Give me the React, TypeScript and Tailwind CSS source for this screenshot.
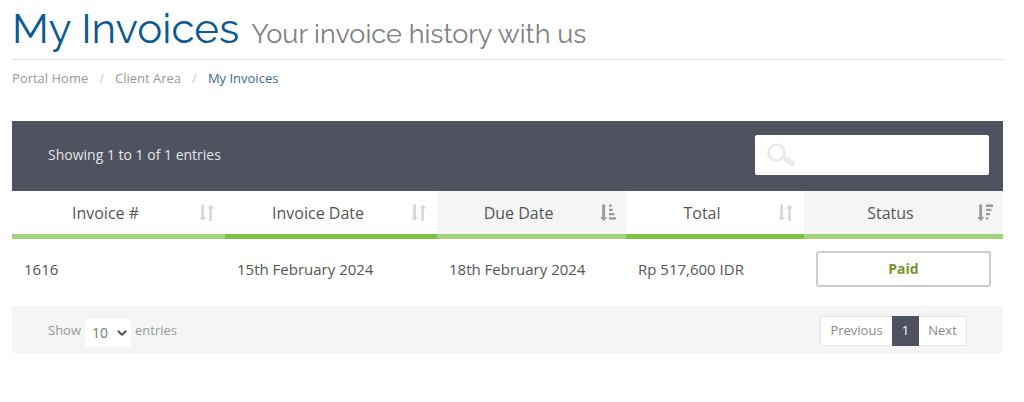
import React from "react";

type SortState = "none" | "asc" | "desc";

const columns: { label: string; sort: SortState; width: string; line: string }[] = [
  { label: "Invoice #", sort: "none", width: "w-[213px]", line: "border-[#a3d47c]" },
  { label: "Invoice Date", sort: "none", width: "w-[212px]", line: "border-[#7cc246]" },
  { label: "Due Date", sort: "asc", width: "w-[189px]", line: "border-[#a3d47c]" },
  { label: "Total", sort: "none", width: "w-[178px]", line: "border-[#7cc246]" },
  { label: "Status", sort: "desc", width: "w-[199px]", line: "border-[#a3d47c]" },
];

const invoices = [
  {
    id: "1616",
    date: "15th February 2024",
    due: "18th February 2024",
    total: "Rp 517,600 IDR",
    status: "Paid",
  },
];

function SortIcon({ sort }: { sort: SortState }) {
  return (
    <svg
      viewBox="0 0 16 18"
      className={`w-4 h-[18px] shrink-0 ${sort === "none" ? "text-[#d9d9d9]" : "text-[#9a9a9a]"}`}
      fill="currentColor"
      aria-hidden="true"
    >
      <path d="M2.2 .6h2.9v12.6h2.4L3.7 17 0 13.2h2.2z" />
      {sort === "none" && <path d="M10.2 17h2.7V4.4h2.6L11.6.6 7.9 4.4h2.3z" />}
      {sort === "asc" && (
        <path d="M9 .6h2.6v2.2H9zM9 4.7h3.6V7H9zM9 8.9h5.2v2.3H9zM9 13.2h7v2.4H9z" />
      )}
      {sort === "desc" && (
        <path d="M9 .6h7V3H9zM9 4.8h5.4v2.3H9zM9 9h4v2.3H9zM9 13.2h2.4v2.3H9z" />
      )}
    </svg>
  );
}

export default function App() {
  return (
    <main className="w-full bg-white pl-3 pr-[21px] pt-1 pb-12 font-['Open_Sans',sans-serif] text-[#555]">
      {/* Page heading */}
      <header className="border-b border-[#ddd] h-14 flex items-baseline gap-3 font-['Raleway','Lato',sans-serif]">
        <h1 className="text-[42px] leading-[50px] font-normal text-[#0b5a92]">My Invoices</h1>
        <p className="text-[27px] leading-[50px] font-normal text-[#808080]">Your invoice history with us</p>
      </header>

      <nav aria-label="Breadcrumb" className="pt-2">
        <ol className="flex text-[13px] leading-5 text-[#999]">
          <li><a href="#home">Portal Home</a></li>
          <li className="px-[11px] text-[#ccc]" aria-hidden="true">/</li>
          <li><a href="#client">Client Area</a></li>
          <li className="px-[11px] text-[#ccc]" aria-hidden="true">/</li>
          <li className="text-[#406a8c]" aria-current="page">My Invoices</li>
        </ol>
      </nav>

      {/* Invoice list */}
      <section className="mt-[33px]">
        <div className="flex items-center justify-between bg-[#4f5360] pl-9 pr-[14px] pb-[2px] h-[70px]">
          <p className="text-sm leading-5 text-[#e4e4e6]">Showing 1 to 1 of 1 entries</p>
          <label className="flex items-center w-[234px] h-10 rounded-xs bg-white pl-3">
            <svg viewBox="0 0 30 26" className="w-[30px] h-[26px] shrink-0" fill="none" aria-hidden="true">
              <circle cx="9.5" cy="10.5" r="8" stroke="#e6eaea" strokeWidth="2.6" />
              <path d="M15.5 14.5l3 2.2" stroke="#e6eaea" strokeWidth="2.5" />
              <path d="M18 16.2l8.8 6.6" stroke="#e6eaea" strokeWidth="5" />
            </svg>
            <input type="search" aria-label="Search invoices" className="w-full min-w-0 px-2 text-sm outline-none" />
          </label>
        </div>

        <table className="w-full table-fixed border-separate border-spacing-0">
          <thead>
            <tr>
              {columns.map((c) => (
                <th
                  key={c.label}
                  className={`${c.width} ${c.line} ${c.sort === "none" ? "bg-white" : "bg-[#f5f5f5]"} border-b-5 p-0 font-normal`}
                >
                  <button type="button" className="w-full h-[43px] px-[10px] flex items-center gap-[10px] text-base">
                    <span className="flex-1 text-center">{c.label}</span>
                    <SortIcon sort={c.sort} />
                  </button>
                </th>
              ))}
            </tr>
          </thead>
          <tbody>
            {invoices.map((inv) => (
              <tr key={inv.id} className="text-[15px] leading-5">
                <td className="px-3 pt-3 pb-[19px]">{inv.id}</td>
                <td className="px-3 pt-3 pb-[19px]">{inv.date}</td>
                <td className="px-3 pt-3 pb-[19px]">{inv.due}</td>
                <td className="px-3 pt-3 pb-[19px]">{inv.total}</td>
                <td className="px-3 pt-3 pb-[19px]">
                  <span className="flex items-center justify-center h-9 rounded-[3px] border-2 border-[#ccc] text-sm leading-5 font-bold text-[#779530]">
                    {inv.status}
                  </span>
                </td>
              </tr>
            ))}
          </tbody>
        </table>

        {/* Page size and pager */}
        <div className="flex items-center justify-between h-[47px] bg-[#f5f5f5] px-9 pt-[2px] text-[13px] text-[#999]">
          <div className="flex items-center gap-1">
            <label htmlFor="page-size">Show</label>
            <span className="grid items-center mt-1">
              <select
                id="page-size"
                defaultValue="10"
                className="col-start-1 row-start-1 appearance-none w-[46px] h-7 rounded-[3px] bg-white pl-[7px] text-sm text-[#777]"
              >
                <option>10</option>
                <option>25</option>
                <option>50</option>
              </select>
              <svg
                viewBox="0 0 10 6"
                className="col-start-1 row-start-1 justify-self-end mr-1 w-[10px] h-[6px] pointer-events-none"
                fill="none"
                stroke="#555"
                strokeWidth="2"
                aria-hidden="true"
              >
                <path d="M.8.8L5 4.8 9.2.8" />
              </svg>
            </span>
            <span>entries</span>
          </div>
          <div className="flex h-[30px] text-[#888]">
            <button type="button" className="w-[72px] rounded-l-[4px] border border-r-0 border-[#e4e4e4] bg-white">Previous</button>
            <button type="button" aria-current="page" className="w-[27px] bg-[#4f5360] text-white">1</button>
            <button type="button" className="w-12 rounded-r-[4px] border border-l-0 border-[#e4e4e4] bg-white">Next</button>
          </div>
        </div>
      </section>
    </main>
  );
}
